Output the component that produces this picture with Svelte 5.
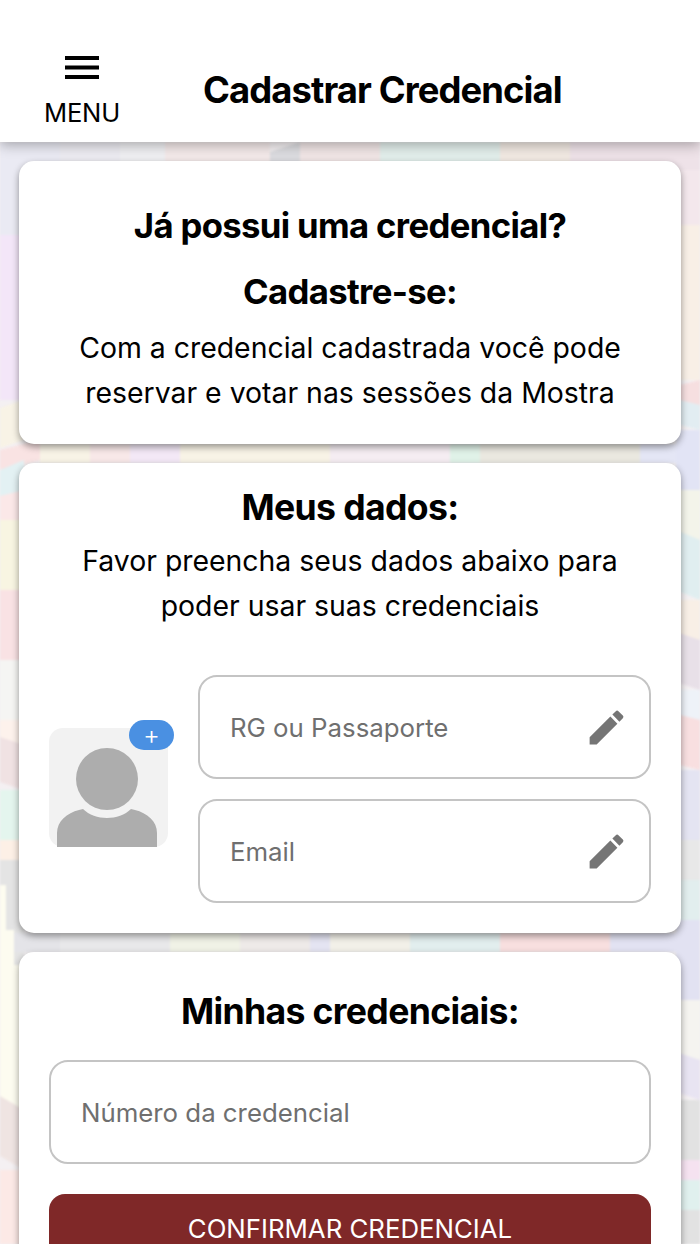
<script>
  // Retalhos pastel do fundo: [x, y, largura, altura, cor, inclinação]
  const patches = [
    [0, 142, 60, 93, '#eaeaf3', 0], [60, 142, 60, 40, '#ecebf1', 0], [120, 142, 50, 40, '#efeff2', 0],
    [165, 142, 105, 40, '#f3e9e9', 0], [270, 142, 30, 30, '#dcdce0', 10], [300, 142, 80, 40, '#f0e5e5', 0],
    [380, 142, 120, 40, '#e2eeeb', 0], [500, 142, 70, 40, '#f1e9e2', 0], [570, 142, 130, 40, '#eee2e8', 0],
    [0, 235, 24, 165, '#f3e6f8', 0], [0, 400, 24, 40, '#f8f3e6', 8], [0, 440, 40, 20, '#f9e3e3', 10],
    [0, 460, 24, 30, '#e3f1f3', 10], [0, 490, 24, 30, '#fbe8e8', 6], [0, 520, 24, 70, '#f8f5e2', 0],
    [0, 590, 24, 70, '#f9e2e4', 0], [0, 660, 24, 60, '#f5f5f3', 0], [0, 720, 24, 25, '#fdf2ec', 0],
    [0, 745, 24, 45, '#f0e2e3', -8], [0, 790, 24, 50, '#e4f5ee', 0], [0, 840, 24, 20, '#fdf0e6', 0],
    [0, 860, 24, 105, '#e4e4e4', 0], [0, 885, 6, 80, '#fdfcf0', 0], [6, 930, 8, 35, '#fdfcf0', 0],
    [0, 965, 24, 145, '#fdfcf0', 0], [0, 1110, 24, 60, '#efe4e2', -14], [0, 1170, 24, 74, '#fce9e6', 0],
    [40, 444, 50, 19, '#f8f3e6', 0], [90, 444, 40, 19, '#f8e8e8', 0], [130, 444, 50, 19, '#f3e8f6', 0],
    [180, 444, 150, 19, '#f8f3e6', 0], [330, 444, 120, 19, '#f5edf2', 0], [450, 444, 30, 19, '#e0f2e8', 0],
    [480, 444, 160, 19, '#eae8e0', 0], [640, 444, 60, 19, '#e4e6f5', 0],
    [14, 933, 46, 19, '#e4e4e8', 0], [60, 933, 110, 19, '#e8e8ea', 0],
    [170, 933, 70, 19, '#f0f2e6', 0], [240, 933, 70, 19, '#eeeae8', 0], [310, 933, 20, 19, '#e4e4f2', 0],
    [330, 933, 80, 19, '#f2f0e8', 0], [410, 933, 90, 19, '#e2eeee', 0], [500, 933, 110, 19, '#f8dfdf', 0],
    [610, 933, 90, 19, '#e2e2f2', 0],
    [676, 170, 24, 55, '#f3e7ec', 0], [676, 225, 24, 155, '#f8efe6', 0], [676, 380, 24, 25, '#f6dfe0', 6],
    [676, 405, 24, 25, '#e2edf2', -6], [676, 430, 24, 60, '#e2e4f5', 0], [676, 490, 24, 50, '#f3f4ea', 0],
    [676, 540, 24, 60, '#e0eef0', -10], [676, 600, 24, 40, '#f8efe6', 0], [676, 640, 24, 50, '#e8e0e8', -8],
    [676, 690, 24, 30, '#eef2f8', 0], [676, 720, 24, 50, '#f8dfe0', -6], [676, 770, 24, 70, '#e4e4f2', 0],
    [676, 840, 24, 40, '#e8e8e8', 0], [676, 880, 24, 40, '#e2eeee', 0], [676, 920, 24, 80, '#e2e2f2', 0],
    [676, 1000, 24, 60, '#f5f4f0', 0], [676, 1060, 24, 40, '#e8e4f2', -8], [676, 1100, 24, 60, '#e2e2e2', 0],
    [676, 1160, 24, 20, '#f5e2f0', 0], [676, 1180, 24, 30, '#e0f0ee', 0], [676, 1210, 24, 34, '#e2e2e2', 0]
  ];

  const pencil = 'M3 17.25V21h3.75L17.81 9.94l-3.75-3.75L3 17.25zM20.71 7.04c.39-.39.39-1.02 0-1.41l-2.34-2.34c-.39-.39-1.02-.39-1.41 0l-1.83 1.83 3.75 3.75 1.83-1.83z';
</script>

<div class="screen">
  <svg class="backdrop" viewBox="0 0 700 1244" aria-hidden="true">
    {#each patches as [x, y, w, h, color, skew]}
      <polygon points="{x},{y + skew} {x + w},{y} {x + w},{y + h} {x},{y + h + skew}" fill={color} />
    {/each}
  </svg>

  <header class="topbar">
    <button class="menu-btn" type="button">
      <svg width="36" height="24" viewBox="0 0 36 24" aria-hidden="true">
        <path d="M1 0h34v4H1zM1 9.500h34v4H1zM1 19h34v4H1z" fill="#000" />
      </svg>
      <span>MENU</span>
    </button>
    <h1>Cadastrar Credencial</h1>
  </header>

  <main class="content">
    <section class="card intro">
      <h2>Já possui uma credencial?</h2>
      <h2 class="second">Cadastre-se:</h2>
      <p>Com a credencial cadastrada você pode<br />reservar e votar nas sessões da Mostra</p>
    </section>

    <section class="card data">
      <h2>Meus dados:</h2>
      <p>Favor preencha seus dados abaixo para<br />poder usar suas credenciais</p>
      <div class="form-row">
        <div class="avatar">
          <svg width="119" height="119" viewBox="0 0 119 119" aria-hidden="true">
            <circle cx="58" cy="51" r="31" fill="#adadad" />
            <path d="M8 119V105C8 93 18 85 30 82L34 81C40 87 49 90 58 90C67 90 76 87 82 81L86 82C98 85 108 93 108 105V119Z" fill="#adadad" />
          </svg>
          <span class="badge">+</span>
        </div>
        <div class="fields">
          <label class="field">
            <input type="text" placeholder="RG ou Passaporte" />
            <svg width="45" height="45" viewBox="0 0 24 24" aria-hidden="true"><path d={pencil} fill="#757575" /></svg>
          </label>
          <label class="field">
            <input type="text" placeholder="Email" />
            <svg width="45" height="45" viewBox="0 0 24 24" aria-hidden="true"><path d={pencil} fill="#757575" /></svg>
          </label>
        </div>
      </div>
    </section>

    <section class="card credentials">
      <h2>Minhas credenciais:</h2>
      <label class="field">
        <input type="text" placeholder="Número da credencial" />
      </label>
      <button class="confirm" type="button">CONFIRMAR CREDENCIAL</button>
    </section>
  </main>
</div>

<style>
  :global(body) {
    margin: 0;
    background: #f4f0f2;
  }

  .screen {
    position: relative;
    width: 700px;
    height: 1244px;
    overflow: hidden;
    font-family: Inter, "Liberation Sans", sans-serif;
    color: #000;
  }

  .backdrop {
    position: absolute;
    inset: 0;
    width: 700px;
    height: 1244px;
    filter: blur(1px);
  }

  /* Cabeçalho */
  .topbar {
    position: relative;
    height: 142px;
    box-sizing: border-box;
    background: #fff;
    box-shadow: 0 3px 12px rgba(0, 0, 0, 0.3);
    display: flex;
    align-items: flex-start;
  }

  .menu-btn {
    width: 164px;
    margin: 56px 0 0;
    padding: 0;
    border: 0;
    background: none;
    color: #000;
    font-family: inherit;
    display: flex;
    flex-direction: column;
    align-items: center;
    gap: 18px;
  }

  .menu-btn span {
    font-size: 25.600px;
    line-height: 30px;
    letter-spacing: -0.2px;
  }

  .topbar h1 {
    margin: 66px 0 0 39px;
    font-size: 36.400px;
    line-height: 48px;
    font-weight: 700;
    letter-spacing: -0.9px;
    white-space: nowrap;
  }

  /* Cartões */
  .content {
    position: relative;
    display: flex;
    flex-direction: column;
    gap: 19px;
    padding: 19px 19px 0;
  }

  .card {
    flex-shrink: 0;
    background: #fff;
    border-radius: 15px;
    box-shadow: 0 3px 7px rgba(0, 0, 0, 0.4);
    text-align: center;
    box-sizing: border-box;
  }

  .card h2 {
    margin: 0;
    font-size: 34.700px;
    line-height: 44px;
    font-weight: 700;
    letter-spacing: -0.65px;
  }

  .card p {
    margin: 0;
    font-size: 28.400px;
    line-height: 45px;
    font-weight: 400;
  }

  .intro {
    height: 283px;
    padding-top: 42px;
  }

  .intro .second {
    margin-top: 22px;
  }

  .intro p {
    margin-top: 12px;
  }

  .data {
    height: 470px;
    padding: 23px 30px 0;
  }

  .card.data h2,
  .card.credentials h2 {
    font-size: 35.600px;
  }

  .data p {
    margin-top: 8px;
  }

  .form-row {
    display: flex;
    align-items: center;
    gap: 30px;
    margin-top: 47px;
  }

  .avatar {
    position: relative;
    flex-shrink: 0;
    width: 119px;
    height: 119px;
    margin-top: -3px;
    background: #f2f2f2;
    border-radius: 14px;
  }

  .avatar svg {
    display: block;
  }

  .badge {
    position: absolute;
    top: -8px;
    left: 80px;
    width: 45px;
    height: 30px;
    border-radius: 15px;
    background: #4a90e2;
    color: #fff;
    font-size: 26px;
    line-height: 30px;
    font-weight: 300;
    text-align: center;
  }

  .fields {
    flex: 1;
    display: flex;
    flex-direction: column;
    gap: 20px;
    min-width: 0;
  }

  .field {
    display: flex;
    align-items: center;
    height: 104px;
    box-sizing: border-box;
    padding: 0 20px 0 30px;
    border: 2px solid #c4c4c4;
    border-radius: 19px;
    background: #fff;
  }

  .field input {
    flex: 1;
    min-width: 0;
    padding: 0;
    border: 0;
    outline: 0;
    background: none;
    font-family: inherit;
    font-size: 25.800px;
    color: #000;
  }

  .field input::placeholder {
    color: #6f6f6f;
    opacity: 1;
  }

  .credentials {
    height: 340px;
    padding: 38px 30px 0;
  }

  .credentials .field {
    margin-top: 26px;
  }

  .confirm {
    display: block;
    width: 100%;
    height: 68px;
    margin-top: 30px;
    border: 0;
    border-radius: 16px;
    background: #7f2828;
    color: #fff;
    font-family: inherit;
    font-size: 25.800px;
    font-weight: 400;
  }
</style>
